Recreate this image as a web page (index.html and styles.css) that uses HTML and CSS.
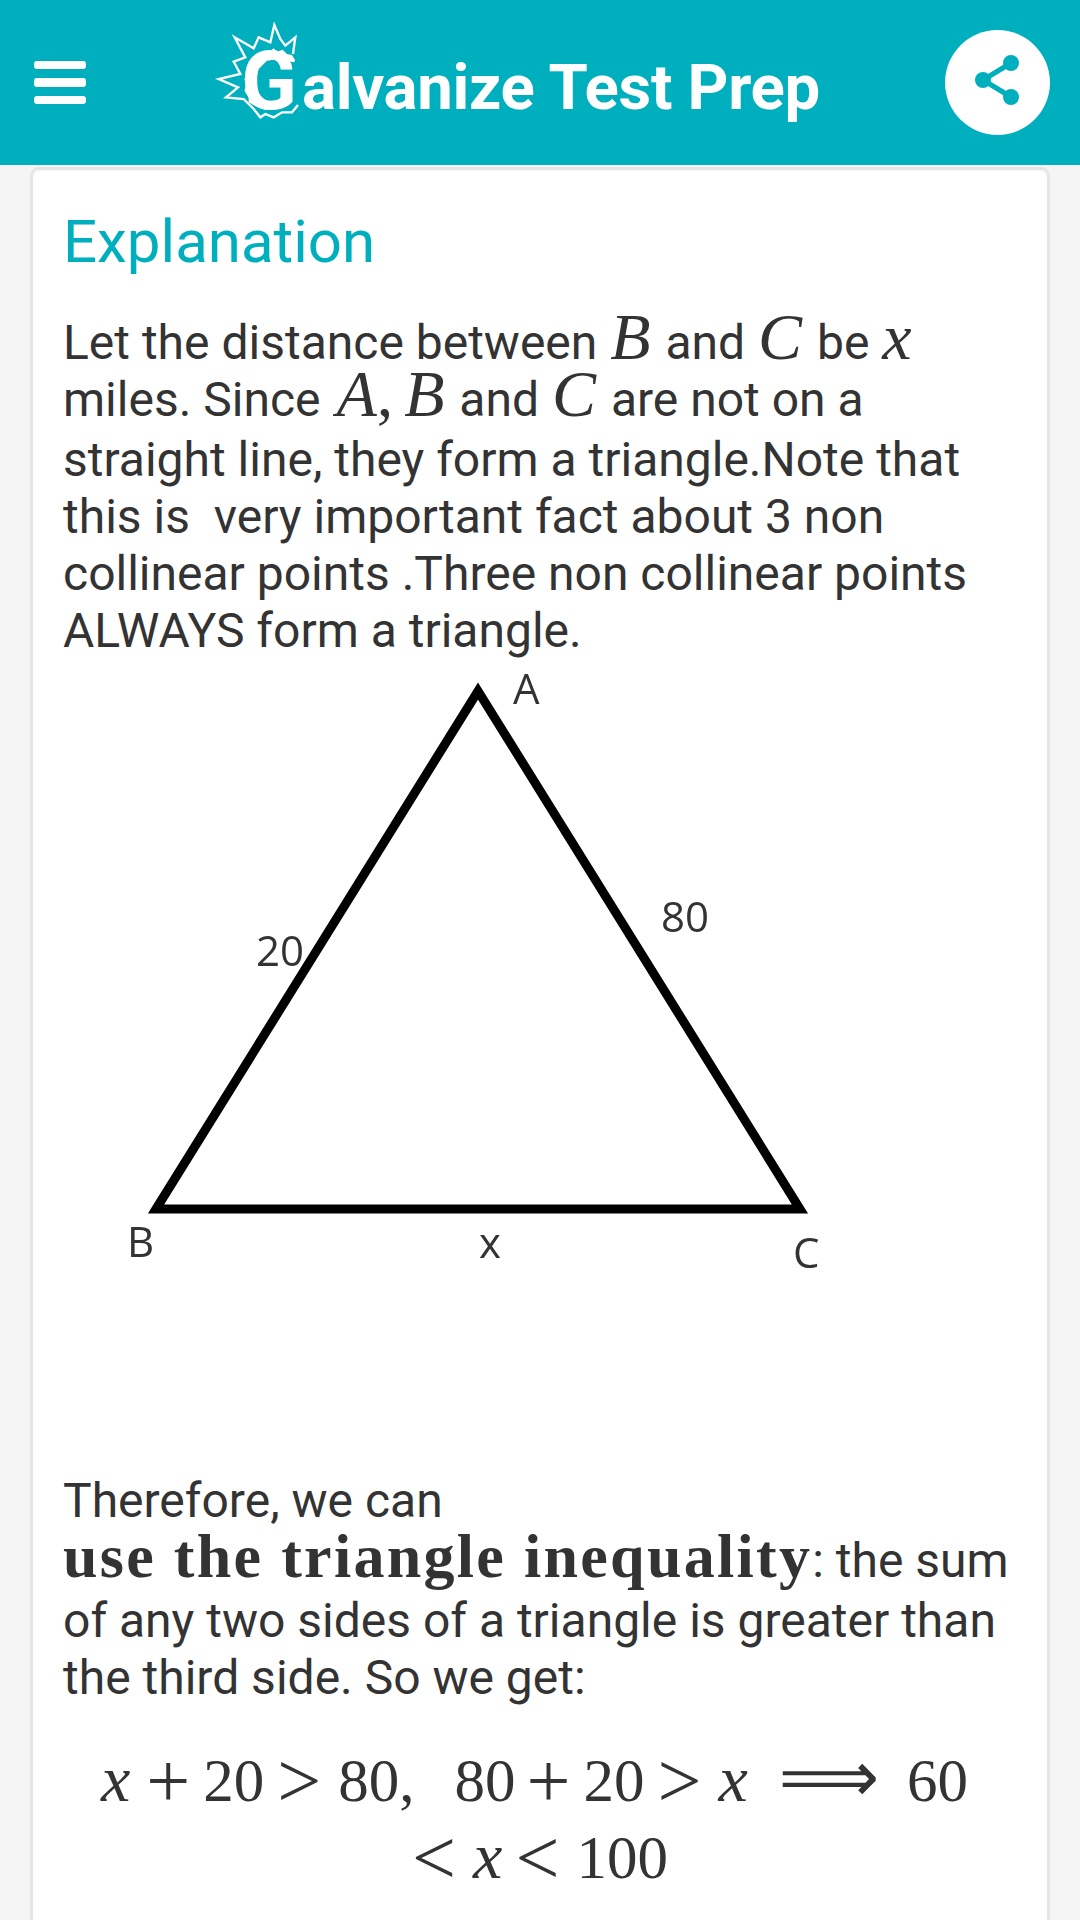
FILE: index.html
```html
<!DOCTYPE html>
<html lang="en">
<head>
<meta charset="utf-8">
<title>Galvanize Test Prep</title>
<link rel="stylesheet" href="styles.css">
</head>
<body>
<header class="topbar">
  <div class="menu"><span></span><span></span><span></span></div>
  <div class="brand">
    <svg class="logo" viewBox="18 15 252 291" width="84" height="97">
      <path class="sun-ray" d="M258 258 L240 280 L210 280 L185 295 L160 285 L145 295 L125 270 L95 240 L42 235 L78 205 L20 180 L85 165 L65 128 L100 115 L68 55 L125 88 L140 55 L175 70 L187 18 L205 60 L220 80 L250 55 L243 105"/>
      <path class="sun-disc" d="M250 125 L240 108 L225 105 L212 92 L195 98 L185 88 L170 100 L150 100 L140 112 L122 115 L115 135 L105 145 L108 165 L97 180 L103 200 L97 215 L110 235 L110 250 L128 260 L150 270 L175 272 L195 268 L185 250 L160 245 L140 225 L130 190 L140 150 L165 125 L200 120 L245 130 Z"/>
      <text class="logo-g" x="88" y="271">G</text>
    </svg>
    <span class="brand-name">alvanize Test Prep</span>
  </div>
  <div class="share">
    <svg viewBox="0 0 105 105" width="105" height="105">
      <path class="share-line" d="M66 33 L38 50 L66 67"/>
      <circle class="share-dot" cx="66" cy="33" r="8"/>
      <circle class="share-dot" cx="38" cy="50" r="8"/>
      <circle class="share-dot" cx="66" cy="67" r="8"/>
    </svg>
  </div>
</header>
<main class="card">
  <h2 class="title">Explanation</h2>
  <p class="para">Let the distance between <i class="m">B</i> and <i class="m">C</i> be <i class="m">x</i> miles. Since <i class="m m-a">A</i><span class="m m-comma">,</span><span class="strut"></span> <i class="m">B</i> and <i class="m">C</i> are not on a straight line, they form a triangle.Note that this is &nbsp;very important fact about 3 non collinear points .Three non collinear points ALWAYS form a triangle.</p>
  <figure class="figure">
    <svg viewBox="0 0 760 640" width="760" height="640">
      <path class="tri" d="M54 532 L376 14 L698 532 Z"/>
      <text class="lbl" x="411" y="27">A</text>
      <text class="lbl" x="559" y="255">80</text>
      <text class="lbl" x="154" y="289">20</text>
      <text class="lbl" x="25" y="580">B</text>
      <text class="lbl" x="377" y="581">x</text>
      <text class="lbl" x="691" y="591">C</text>
    </svg>
  </figure>
  <p class="para">Therefore, we can<br><b class="mb">use the triangle inequality</b><span class="strut tall"></span>: the sum of any two sides of a triangle is greater than the third side. So we get:</p>
  <div class="display">
    <div class="dline lead"><i class="var var-gap">x</i><span class="bin">+</span>20<span class="rel">&gt;</span>80,<span class="quad"></span>80<span class="bin">+</span>20<span class="rel">&gt;</span><i class="var">x</i><span class="arrow">⟹</span>60</div>
    <div class="dline"><span class="rel first">&lt;</span><i class="var">x</i><span class="rel">&lt;</span>100</div>
  </div>
</main>
</body>
</html>
```
FILE: styles.css
```css
* { box-sizing: border-box; }
html, body { margin: 0; padding: 0; }
body {
  width: 1080px;
  height: 1920px;
  overflow: hidden;
  background: #f5f5f5;
  font-family: Roboto, sans-serif;
  color: #333;
}
.topbar {
  height: 165px;
  background: #00afbd;
  display: flex;
  align-items: center;
  justify-content: space-between;
  padding: 0 30px 0 34px;
}
.menu { display: flex; flex-direction: column; gap: 9px; width: 52px; }
.menu span { display: block; height: 8.5px; background: #fff; border-radius: 3px; }
.brand { display: flex; align-items: center; color: #fff; margin: -1px 0 0 7px; }
.logo { display: block; flex: none; margin-top: -20px; overflow: visible; }
.sun-ray { fill: none; stroke: #fff; stroke-width: 7; stroke-linejoin: miter; }
.sun-disc { fill: #fff; }
.logo-g { font-family: Roboto, sans-serif; font-weight: 700; font-size: 245px; fill: #fff; }
.brand-name { font-size: 63.5px; font-weight: 700; line-height: 1; letter-spacing: -0.3px; white-space: nowrap; margin-top: 11px; }
.share { width: 105px; height: 105px; border-radius: 50%; background: #fff; margin-top: -1px; }
.share svg { display: block; }
.share-line { fill: none; stroke: #00afbd; stroke-width: 5; }
.share-dot { fill: #00afbd; }
.card {
  margin: 2px 30px 0;
  height: 1800px;
  background: #fff;
  border: 3px solid #e6e6e6;
  border-radius: 9px;
  box-shadow: inset 0 0 4px rgba(0,0,0,.05);
  padding: 37px 30px 0;
}
.title { margin: 0 0 37px; font-size: 60px; line-height: 70px; font-weight: 400; color: #00afbd; }
.para { margin: 0; font-size: 48px; line-height: 57px; }
.m { font-family: "Liberation Serif", serif; font-size: 66px; line-height: 0; margin: 0 3px 0 1px; }
.m-a { margin: 0 0 0 4px; }
.m-comma { margin: 0 -2px 0 0; }
.mb { font-family: "Liberation Serif", serif; font-size: 62px; font-weight: 700; line-height: 0; letter-spacing: 2.3px; }
.strut { display: inline-block; width: 0; height: 15px; vertical-align: -15px; }
.strut.tall { height: 62.5px; }
.figure { margin: 18px 0 0 39px; height: 795px; }
.figure svg { display: block; filter: blur(.5px); overflow: visible; }
.tri { fill: none; stroke: #000; stroke-width: 9; stroke-linejoin: miter; }
.lbl { font-family: "Open Sans", sans-serif; font-size: 42px; fill: #333; }
.display { font-family: "Liberation Serif", serif; font-size: 61px; text-align: center; margin-top: 36px; }
.dline { line-height: 77px; white-space: nowrap; }
.lead { padding-right: 11px; }
.var { font-size: 66px; line-height: 0; }
.var-gap { margin-right: 5px; }
.bin, .rel { font-size: 78px; line-height: 0; position: relative; top: 6px; }
.bin { margin: 0 13px 0 11px; }
.rel { margin: 0 17px 0 13px; }
.rel.first { margin-left: 0; }
.quad { display: inline-block; width: 40px; }
.arrow { font-family: "DejaVu Sans", sans-serif; margin: 0 28px 0 31px; font-size: 70px; line-height: 0; }
```
